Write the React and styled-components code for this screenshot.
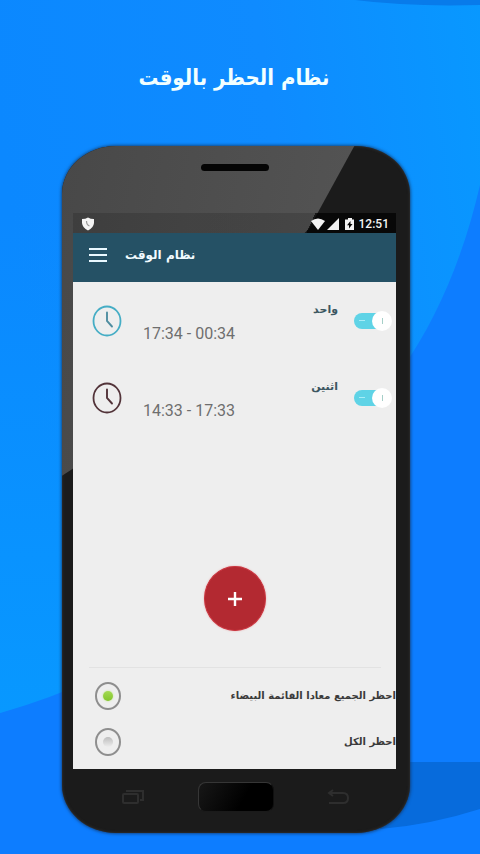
import React, { useState } from "react";
import styled, { createGlobalStyle } from "styled-components";

const GlobalStyle = createGlobalStyle`
  * { box-sizing: border-box; }
  body { margin: 0; background: #0d7fff; font-family: "DejaVu Sans", "Noto Sans", sans-serif; }
  h1, h2, p { margin: 0; }
`;

const Page = styled.main`
  position: relative;
  isolation: isolate;
  display: flex;
  flex-direction: column;
  min-height: 100vh;
  padding: 0 70px 21px 62px;
  overflow: hidden;
`;

const Backdrop = styled.svg`
  position: absolute;
  inset: 0;
  z-index: -1;
  width: 100%;
  height: 100%;
`;

const Hero = styled.header`
  display: flex;
  align-items: center;
  justify-content: center;
  height: 146px;
  padding: 10px 4px 0 0;
`;

const HeroTitle = styled.h1`
  color: #f2ffff;
  font-family: "DejaVu Sans Condensed", "DejaVu Sans", sans-serif;
  font-size: 22px;
  font-weight: 700;
  line-height: 40px;
  white-space: nowrap;
`;

const Phone = styled.section`
  position: relative;
  isolation: isolate;
  display: flex;
  flex: 1;
  flex-direction: column;
  padding: 0 14px 0 11px;
  overflow: hidden;
  border-radius: 54px / 48px;
  background: #1b1b1b;
  box-shadow: 0 0 3px 1px rgba(20, 50, 90, 0.7), inset 0 0 3px rgba(60, 60, 60, 0.9);

  &::before {
    content: "";
    position: absolute;
    inset: 0;
    z-index: -1;
    background: linear-gradient(100deg, #484848, #575757 85%);
    clip-path: polygon(0 0, 84% 0, 71% 12%, 3% 47%, 0 48%);
  }
`;

const Earpiece = styled.div`
  flex: none;
  width: 68px;
  height: 7px;
  margin: 18px auto 42px;
  border-radius: 4px;
  background: #050505;
`;

const StatusBar = styled.div`
  display: flex;
  flex: none;
  align-items: center;
  justify-content: space-between;
  height: 20px;
  padding: 2px 7px 0 8px;
  background: linear-gradient(115deg, rgba(0, 0, 0, 0.15) 73%, rgba(0, 0, 0, 0.7) 73%);
  color: #f4f4f4;
  font: 500 12px/16px Roboto, sans-serif;
`;

const StatusIcons = styled.div`
  display: flex;
  align-items: center;
  gap: 4px;
`;

const AppBar = styled.header`
  display: flex;
  flex: none;
  align-items: center;
  gap: 18px;
  height: 49px;
  padding: 0 16px 5px;
  background: #255165;
`;

const MenuButton = styled.button`
  display: flex;
  flex-direction: column;
  gap: 4px;
  width: 18px;
  padding: 0;
  border: 0;
  background: none;
`;

const MenuLine = styled.span`
  height: 2px;
  background: #e9f8ff;
`;

const AppTitle = styled.h2`
  color: #f2fbff;
  font-size: 12px;
  font-weight: 700;
  line-height: 20px;
`;

const Screen = styled.div`
  display: flex;
  flex: 1;
  flex-direction: column;
  padding-bottom: 4px;
  background: #eeeeee;
`;

const ScheduleRow = styled.div`
  display: flex;
  align-items: center;
  height: 77px;
  padding: 0 4px 0 19px;
`;

const Details = styled.div`
  display: flex;
  flex: 1;
  flex-direction: column;
  gap: 2px;
  padding: 4px 16px 0 21px;
`;

const ScheduleName = styled.label`
  align-self: flex-end;
  color: #3b5661;
  font-size: 11px;
  font-weight: 700;
  line-height: 20px;
`;

const ScheduleTime = styled.p`
  color: #6e6e6e;
  font: 400 16px/24px Roboto, sans-serif;
`;

const Toggle = styled.input`
  appearance: none;
  display: flex;
  align-items: center;
  justify-content: space-between;
  width: 38px;
  height: 16px;
  margin: 0;
  border-radius: 8px;
  background: linear-gradient(to right, #5fd3e6 60%, transparent 60%);

  &::before {
    content: "";
    width: 6px;
    height: 1px;
    margin-left: 5px;
    background: #a8edf7;
  }

  &::after {
    content: "";
    width: 20px;
    height: 20px;
    border-radius: 50%;
    background: linear-gradient(#a5cfc8, #a5cfc8) center / 1px 6px no-repeat #ffffff;
  }

  &:not(:checked) {
    flex-direction: row-reverse;
    background: #c4c4c4;
  }
`;

const AddButton = styled.button`
  display: grid;
  place-items: center;
  width: 62px;
  height: 65px;
  margin: auto auto 36px;
  padding: 0;
  border: 1px solid #c9353f;
  border-radius: 50%;
  background: #b32931;
  box-shadow: 0 0 2px #e7a5a8;
`;

const Divider = styled.hr`
  width: auto;
  height: 1px;
  margin: 0 15px 5px 16px;
  border: 0;
  background: #e2e2e2;
`;

const Choice = styled.label`
  display: flex;
  align-items: center;
  justify-content: space-between;
  height: 46px;
  padding-left: 22px;
  color: #3a3a3a;
  font-size: 10px;
  font-weight: 700;
  line-height: 16px;
`;

const Radio = styled.input`
  appearance: none;
  display: grid;
  place-items: center;
  width: 26px;
  height: 28px;
  margin: 0;
  border: 2px solid #8e8e8e;
  border-radius: 50%;

  &::before {
    content: "";
    width: 10px;
    height: 10px;
    border-radius: 50%;
    background: linear-gradient(#bdbdbd, #ededed);
  }

  &:checked::before {
    background: linear-gradient(#a3da52, #83c52b);
    box-shadow: 0 0 2px #b9e67c;
  }
`;

const HardwareKeys = styled.div`
  display: flex;
  flex: none;
  align-items: flex-start;
  justify-content: space-between;
  height: 64px;
  padding: 13px 45px 0 47px;
`;

const Key = styled.button`
  display: grid;
  place-items: center;
  width: 26px;
  height: 30px;
  padding: 0;
  border: 0;
  background: none;
`;

const HomeKey = styled.button`
  width: 76px;
  height: 30px;
  padding: 0;
  border: 1px solid;
  border-color: #363636 #101010 #1a1a1a #363636;
  border-radius: 8px;
  background: linear-gradient(120deg, #171717, #000000 60%);
`;

const schedules = [
  { id: "one", name: "واحد", time: "17:34 - 00:34", ring: "#45adc5", hand: "#4f8da0" },
  { id: "two", name: "اثنين", time: "14:33 - 17:33", ring: "#523339", hand: "#523339" },
];

const choices = [
  { id: "whitelist", text: "احظر الجميع معادا القائمة البيضاء" },
  { id: "all", text: "احظر الكل" },
];

function BlueWaves() {
  return (
    <Backdrop viewBox="0 0 480 854" preserveAspectRatio="none" aria-hidden="true">
      <defs>
        <linearGradient id="sky" x1="0" y1="0.2" x2="1" y2="0">
          <stop offset="0" stopColor="#0b88ff" />
          <stop offset="0.55" stopColor="#0f8bff" />
          <stop offset="1" stopColor="#0898ff" />
        </linearGradient>
        <linearGradient id="leftGlow" x1="0" y1="0" x2="0" y2="1">
          <stop offset="0.3" stopColor="#0898ff" stopOpacity="0" />
          <stop offset="1" stopColor="#0898ff" />
        </linearGradient>
      </defs>
      <rect width="480" height="854" fill="#0d7dff" />
      <path d="M0 0H480V185C465 250 440 315 400 372C320 520 180 660 0 713Z" fill="url(#sky)" />
      <path d="M0 0H100V676Q50 699 0 713Z" fill="url(#leftGlow)" />
      <path d="M355 0H480V5Q410 7 355 0Z" fill="#087bea" />
      <path d="M380 762H480V809Q430 825 380 829Z" fill="#076bdc" />
    </Backdrop>
  );
}

function Clock({ ring, hand }) {
  return (
    <svg width="30" height="32" viewBox="0 0 30 32" fill="none" aria-hidden="true">
      <ellipse cx="15" cy="16" rx="13.5" ry="14.5" stroke={ring} strokeWidth="1.8" />
      <path d="M15 7.500V16L20 21.500" stroke={hand} strokeWidth="1.9" strokeLinecap="round" />
    </svg>
  );
}

export default function App() {
  const [choice, setChoice] = useState("whitelist");
  return (
    <Page>
      <GlobalStyle />
      <BlueWaves />
      <Hero>
        <HeroTitle dir="rtl">نظام الحظر بالوقت</HeroTitle>
      </Hero>
      <Phone>
        <Earpiece />
        <StatusBar>
          <svg width="14" height="14" viewBox="0 0 14 14" aria-hidden="true">
            <path d="M1 2Q4.500 2 7 .5Q9.500 2 13 2V6Q12.500 11 7 13.500Q1.500 11 1 6Z" fill="#f4f4f4" />
            <path d="M5.500 4Q5.500 8 8.500 9" stroke="#999" strokeWidth="1.2" fill="none" />
          </svg>
          <StatusIcons>
            <svg width="44" height="14" viewBox="0 0 44 14" fill="#f4f4f4" aria-hidden="true">
              <path d="M0 4Q7 -1 14 4L7 13Z" />
              <path d="M28 1V13H16Z" />
              <path fillRule="evenodd" d="M37 1H41V2.500H43V13H34V2.500H37ZM39.500 4L36 8.300H38V11.500L41.500 7H39.500Z" />
            </svg>
            <span>12:51</span>
          </StatusIcons>
        </StatusBar>
        <AppBar>
          <MenuButton type="button" aria-label="القائمة">
            <MenuLine />
            <MenuLine />
            <MenuLine />
          </MenuButton>
          <AppTitle dir="rtl">نظام الوقت</AppTitle>
        </AppBar>
        <Screen>
          {schedules.map((item) => (
            <ScheduleRow key={item.id}>
              <Clock ring={item.ring} hand={item.hand} />
              <Details>
                <ScheduleName dir="rtl" htmlFor={item.id}>{item.name}</ScheduleName>
                <ScheduleTime>{item.time}</ScheduleTime>
              </Details>
              <Toggle id={item.id} type="checkbox" defaultChecked />
            </ScheduleRow>
          ))}
          <AddButton type="button" aria-label="إضافة">
            <svg width="16" height="16" viewBox="0 0 16 16" aria-hidden="true">
              <path d="M8 1V15M1 8H15" stroke="#fff" strokeWidth="2.400" />
            </svg>
          </AddButton>
          <Divider />
          {choices.map((item) => (
            <Choice key={item.id}>
              <Radio
                type="radio"
                name="block"
                checked={choice === item.id}
                onChange={() => setChoice(item.id)}
              />
              <span dir="rtl">{item.text}</span>
            </Choice>
          ))}
        </Screen>
        <HardwareKeys>
          <Key type="button" aria-label="التطبيقات الأخيرة">
            <svg width="24" height="16" viewBox="0 0 24 16" fill="none" stroke="#2e2e2e" strokeWidth="2" aria-hidden="true">
              <rect x="2" y="5" width="15" height="9" rx="1" />
              <path d="M5 2H22V11H19" />
            </svg>
          </Key>
          <HomeKey type="button" aria-label="الرئيسية" />
          <Key type="button" aria-label="رجوع">
            <svg width="24" height="16" viewBox="0 0 24 16" fill="none" stroke="#2e2e2e" strokeWidth="2" aria-hidden="true">
              <path d="M3 4H17Q22 4 22 9T17 14H3M7 1L3 4L7 7" />
            </svg>
          </Key>
        </HardwareKeys>
      </Phone>
    </Page>
  );
}
